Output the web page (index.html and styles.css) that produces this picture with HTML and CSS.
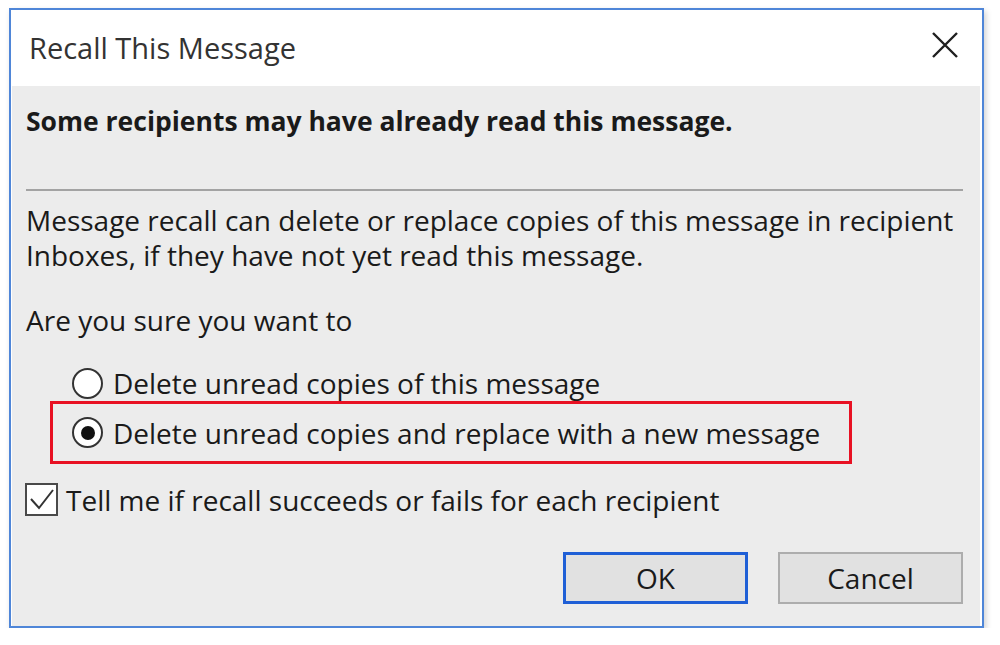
FILE: index.html
```html
<!DOCTYPE html>
<html lang="en">
<head>
    <meta charset="UTF-8">
    <meta name="viewport" content="width=device-width, initial-scale=1.0">
    <title>Recall This Message</title>
    <link rel="stylesheet" href="styles.css">
</head>
<body>
    <div class="dialog">
        <div class="titlebar">
            <span class="title">Recall This Message</span>
            <svg class="close" width="28" height="28" viewBox="0 0 28 28">
                <path d="M2 2 L26 26 M26 2 L2 26" stroke="#1f1f1f" stroke-width="2.4" fill="none"/>
            </svg>
        </div>
        <div class="content">
            <p class="warning">Some recipients may have already read this message.</p>
            <hr class="separator">
            <p class="info">Message recall can delete or replace copies of this message in recipient<br>Inboxes, if they have not yet read this message.</p>
            <p class="question">Are you sure you want to</p>

            <div class="options">
                <label class="option">
                    <span class="radio"></span>
                    Delete unread copies of this message
                </label>
                <label class="option highlighted">
                    <span class="radio checked"></span>
                    Delete unread copies and replace with a new message
                </label>
            </div>

            <label class="check-row">
                <span class="checkbox">
                    <svg width="29" height="29" viewBox="0 0 29 29">
                        <path d="M4 14 L12 23 L26 5" stroke="#333" stroke-width="2" fill="none"/>
                    </svg>
                </span>
                Tell me if recall succeeds or fails for each recipient
            </label>

            <div class="buttons">
                <button class="btn default">OK</button>
                <button class="btn">Cancel</button>
            </div>
        </div>
    </div>
</body>
</html>
```

FILE: styles.css
```css
body {
    margin: 0;
    background: #ffffff;
    font-family: "Open Sans", "Noto Sans", Arial, sans-serif;
    color: #1a1a1a;
}
.dialog {
    width: 968px;
    height: 615px;
    margin: 8px 0 0 9px;
    border: 2px solid #4f86d8;
    background: #ffffff;
    padding: 1px 2px 0 1px;
    box-shadow: 2px 3px 6px rgba(0, 0, 0, 0.18);
    display: flex;
    flex-direction: column;
}
.titlebar {
    height: 75px;
    flex-shrink: 0;
    display: flex;
    align-items: center;
    justify-content: space-between;
    padding: 0 21px 0 17px;
}
.title {
    font-size: 29px;
    color: #333333;
    margin-top: -2px;
}
.close {
    margin-top: -7px;
}
.content {
    flex: 1;
    background: #ececec;
    padding: 0 14px;
    display: flex;
    flex-direction: column;
    font-size: 28px;
}
.warning {
    font-weight: bold;
    font-size: 26.5px;
    line-height: 35px;
    margin: 18px 0 0 0;
}
.separator {
    border: none;
    border-top: 2px solid #a3a3a3;
    margin: 50px 3px 0 0;
}
.info {
    margin: 12px 0 0 0;
    line-height: 35px;
    white-space: nowrap;
}
.question {
    margin: 30px 0 0 0;
    line-height: 35px;
}
.options {
    margin: 24px 0 0 24px;
    display: flex;
    flex-direction: column;
}
.option {
    display: flex;
    align-items: center;
    gap: 10px;
    height: 42px;
    padding-left: 22px;
    width: 802px;
    box-sizing: border-box;
}
.option.highlighted {
    border: 3px solid #e81123;
    height: 63px;
    padding-left: 19px;
    margin-top: -3px;
}
.radio {
    width: 31px;
    height: 31px;
    box-sizing: border-box;
    border: 2px solid #333333;
    border-radius: 50%;
    background: #ffffff;
    display: flex;
    align-items: center;
    justify-content: center;
    flex-shrink: 0;
}
.radio.checked::after {
    content: "";
    width: 14px;
    height: 14px;
    border-radius: 50%;
    background: #111111;
}
.check-row {
    display: flex;
    align-items: center;
    gap: 8px;
    height: 35px;
    margin: 18px 0 0 -1px;
}
.checkbox {
    width: 33px;
    height: 33px;
    box-sizing: border-box;
    border: 2px solid #4a4a4a;
    background: #ffffff;
    flex-shrink: 0;
}
.checkbox svg {
    display: block;
}
.buttons {
    display: flex;
    justify-content: flex-end;
    gap: 30px;
    margin: 35px 3px 0 0;
}
.btn {
    width: 185px;
    height: 52px;
    font-family: inherit;
    font-size: 28px;
    color: #1a1a1a;
    background: #e1e1e1;
    border: 2px solid #adadad;
    padding: 0;
}
.btn.default {
    border: 3px solid #1f5fd6;
}
```
